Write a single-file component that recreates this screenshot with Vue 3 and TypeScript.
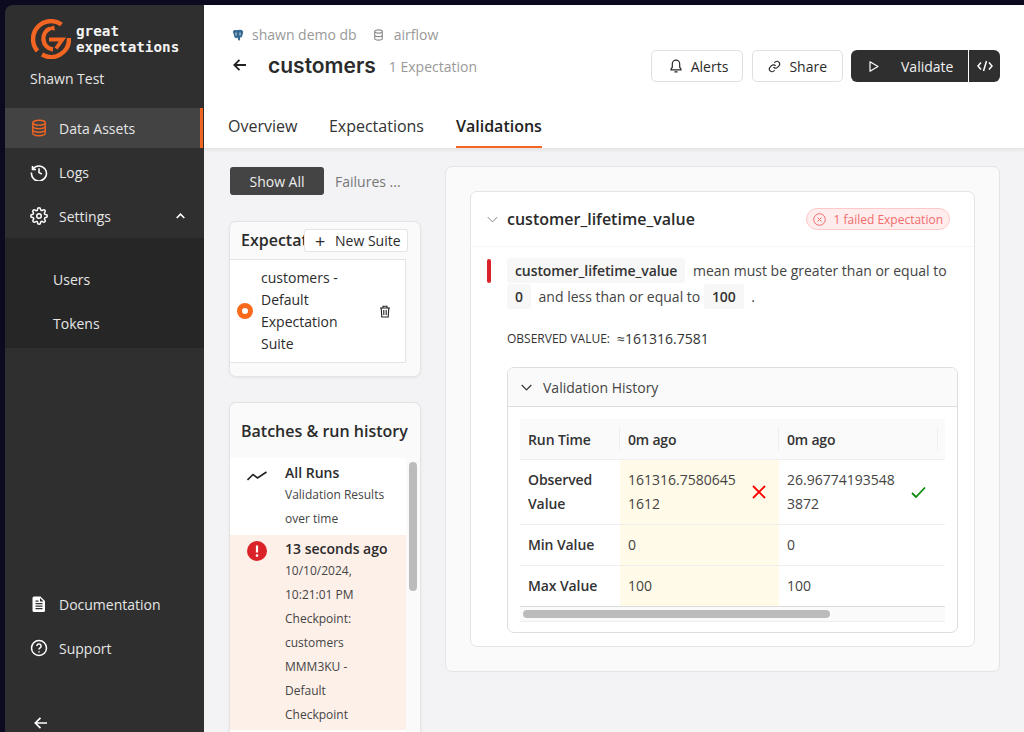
<script setup lang="ts">
const nav = [
  { label: 'Data Assets', icon: 'db', active: true },
  { label: 'Logs', icon: 'history', active: false },
]
</script>

<template>
  <div class="window">
    <aside class="sidebar">
      <div class="brand">
        <svg class="logo" width="40" height="40" viewBox="0 0 40 40" fill="none" stroke="#f26522" stroke-width="4.400">
          <path d="M30.500 5.500A18 18 0 0 0 6.500 32" />
          <path d="M11 35.500A18 18 0 0 0 38 19" />
          <path d="M19 9.500A11 11 0 0 0 22 30.500" />
          <path d="M18 20.500H31.500L25 29.500" stroke-width="3.800" />
          <path d="M14 10l9-3.500 1 5z" fill="#f26522" stroke="none" />
        </svg>
        <div class="brand-text">great<br />expectations</div>
      </div>
      <div class="org">Shawn Test</div>
      <nav class="nav">
        <a v-for="n in nav" :key="n.label" class="nav-item" :class="{ active: n.active }">
          <svg v-if="n.icon === 'db'" width="18" height="18" viewBox="0 0 18 18" fill="none" stroke="#f26522" stroke-width="1.400">
            <ellipse cx="9" cy="3.700" rx="6.200" ry="2.400" />
            <path d="M2.800 3.700V14.300C2.800 15.600 5.600 16.700 9 16.700S15.200 15.600 15.200 14.300V3.700" />
            <path d="M2.800 7.200C2.800 8.500 5.600 9.600 9 9.600S15.200 8.500 15.200 7.200M2.800 10.800C2.800 12.100 5.600 13.200 9 13.200S15.200 12.100 15.200 10.800" />
          </svg>
          <svg v-else width="18" height="18" viewBox="0 0 18 18" fill="none" stroke="#fff" stroke-width="1.600">
            <path d="M2.500 3v3.500H6" />
            <path d="M2.700 6.300A7.500 7.500 0 1 1 1.500 9.500" />
            <path d="M9 5.200V9.500l2.800 1.600" />
          </svg>
          <span>{{ n.label }}</span>
        </a>
        <a class="nav-item">
          <svg width="18" height="18" viewBox="0 0 24 24" fill="none" stroke="#fff" stroke-width="2">
            <circle cx="12" cy="12" r="3" />
            <path d="M19.400 15a1.650 1.650 0 0 0 .33 1.820l.06.06a2 2 0 1 1-2.830 2.830l-.06-.06a1.650 1.650 0 0 0-2.820 1.170V21a2 2 0 1 1-4 0v-.09A1.650 1.650 0 0 0 7.260 19.700l-.06.06a2 2 0 1 1-2.830-2.830l.06-.06A1.650 1.650 0 0 0 3.260 14H3a2 2 0 1 1 0-4h.09A1.650 1.650 0 0 0 4.300 7.260l-.06-.06a2 2 0 1 1 2.830-2.830l.06.06A1.650 1.650 0 0 0 10 3.260V3a2 2 0 1 1 4 0v.09a1.650 1.650 0 0 0 2.820 1.170l.06-.06a2 2 0 1 1 2.830 2.830l-.06.06A1.650 1.650 0 0 0 20.740 10H21a2 2 0 1 1 0 4h-.09a1.650 1.650 0 0 0-1.510 1z" />
          </svg>
          <span>Settings</span>
          <svg class="caret" width="9" height="6" viewBox="0 0 9 6" fill="none" stroke="#fff" stroke-width="1.600"><path d="M.700 5l3.800-3.800L8.300 5" /></svg>
        </a>
      </nav>
      <div class="subnav">
        <a class="sub-item">Users</a>
        <a class="sub-item">Tokens</a>
      </div>
      <div class="nav-bottom">
        <a class="nav-item">
          <svg width="18" height="18" viewBox="0 0 18 18" fill="#fff">
            <path fill-rule="evenodd" d="M4 1.500h6.500l4.500 4.500v9.500a1.500 1.500 0 0 1-1.500 1.500h-9.500A1.500 1.500 0 0 1 2.500 15.500V3A1.500 1.500 0 0 1 4 1.500zM5.500 8v1.200h7V8zM5.500 10.500v1.200h7v-1.200zM5.500 13v1.200h7V13zM5.500 5.500v1.200h3V5.500zM10 3v3.500h3.500z" />
          </svg>
          <span>Documentation</span>
        </a>
        <a class="nav-item">
          <svg width="18" height="18" viewBox="0 0 18 18" fill="none" stroke="#fff" stroke-width="1.500">
            <circle cx="9" cy="9" r="7.500" />
            <path d="M6.900 7a2.100 2.100 0 1 1 3.200 1.800C9.400 9.300 9 9.600 9 10.600" />
            <path d="M9 12.300v1.200" />
          </svg>
          <span>Support</span>
        </a>
        <div class="collapse">
          <svg width="14" height="14" viewBox="0 0 14 14" fill="none" stroke="#fff" stroke-width="1.700"><path d="M13 7H1.500M6.500 1.800L1.300 7l5.200 5.200" /></svg>
        </div>
      </div>
    </aside>

    <main class="main">
      <header class="header">
        <div class="header-top">
          <div class="titles">
            <div class="crumbs">
              <svg width="12" height="13" viewBox="0 0 12 13">
                <path d="M1 3C1 1 3 .8 4.500 1.200L6 1 8 .8c2.500 0 3.500 1.500 3 3.500L10 7.500c-.5 1.200-1.200 1-1.700.4L8 10.500c-.2 1.500-1.500 1.500-2 0L5.800 8.500C4.500 9.500 2.800 9 2.300 7.500z" fill="#336791" />
                <path d="M4 3.500v3M8 3.500v3" stroke="#fff" stroke-width=".8" />
              </svg>
              <span class="crumb-a">shawn demo db</span>
              <svg class="crumb-icon" width="11" height="12" viewBox="0 0 11 12" fill="none" stroke="#8a8a8a" stroke-width="1.100">
                <ellipse cx="5.500" cy="2.500" rx="3.800" ry="1.600" />
                <path d="M1.700 2.500v7c0 .9 1.700 1.600 3.800 1.600s3.800-.7 3.800-1.600v-7M1.700 6c0 .9 1.700 1.600 3.800 1.600S9.300 6.900 9.300 6" />
              </svg>
              <span>airflow</span>
            </div>
            <div class="title-row">
              <svg class="back" width="14" height="14" viewBox="0 0 14 14" fill="none" stroke="#222" stroke-width="1.800"><path d="M13 7H1.500M6.500 1.800L1.300 7l5.200 5.200" /></svg>
              <h1>customers</h1>
              <span class="count">1 Expectation</span>
            </div>
          </div>
          <div class="actions">
            <button class="btn alerts">
              <svg width="14" height="14" viewBox="0 0 14 14" fill="none" stroke="#2b2b2b" stroke-width="1.200">
                <path d="M7 1.200a3.700 3.700 0 0 0-3.700 3.700v3.300l-1.300 2v.6h10v-.6l-1.300-2V4.900A3.700 3.700 0 0 0 7 1.200zM5.400 12.800h3.200" />
              </svg>
              <span>Alerts</span>
            </button>
            <button class="btn share">
              <svg width="13" height="13" viewBox="0 0 24 24" fill="none" stroke="#2b2b2b" stroke-width="2.200">
                <path d="M10 13a5 5 0 0 0 7.500.5l3-3a5 5 0 0 0-7-7l-1.700 1.700" />
                <path d="M14 11a5 5 0 0 0-7.500-.5l-3 3a5 5 0 0 0 7 7l1.700-1.700" />
              </svg>
              <span>Share</span>
            </button>
            <div class="split">
              <button class="split-main">
                <svg width="12" height="13" viewBox="0 0 12 13" fill="none" stroke="#fff" stroke-width="1.200"><path d="M2 1.800v9.400l8-4.700z" stroke-linejoin="round" /></svg>
                <span>Validate</span>
              </button>
              <button class="split-code">
                <svg width="16" height="12" viewBox="0 0 16 12" fill="none" stroke="#fff" stroke-width="1.500"><path d="M4 2.500L1 6l3 3.500M12 2.500L15 6l-3 3.500M9.500 1l-3 10" /></svg>
              </button>
            </div>
          </div>
        </div>
        <div class="tabs">
          <a class="tab">Overview</a>
          <a class="tab">Expectations</a>
          <a class="tab current">Validations</a>
        </div>
      </header>

      <div class="body">
        <div class="left">
          <div class="toggle">
            <span class="toggle-on">Show All</span>
            <span class="toggle-off">Failures ...</span>
          </div>
          <section class="side-card suites">
            <div class="suite-head">
              <span class="suite-title">Expectat</span>
              <button class="new-suite"><span class="plus">+</span>New Suite</button>
            </div>
            <div class="suite-row">
              <span class="radio"></span>
              <span class="suite-name">customers - Default Expectation Suite</span>
              <svg width="12" height="13" viewBox="0 0 12 13" fill="none" stroke="#222" stroke-width="1.100">
                <path d="M1 3h10M4 3V1.300h4V3M2.200 3l.6 9h6.400l.6-9M4.800 5v5M7.200 5v5" />
              </svg>
            </div>
          </section>
          <section class="side-card runs">
            <div class="runs-title">Batches &amp; run history</div>
            <div class="runs-body">
              <div class="runs-list">
                <div class="run overview">
                  <svg class="run-icon" width="20" height="10" viewBox="0 0 20 10" fill="none" stroke="#222" stroke-width="1.600"><path d="M.500 9L6 3.500l4.500 3.500L19.500 1" /></svg>
                  <div class="run-text">
                    <div class="run-title">All Runs</div>
                    <div>Validation Results over time</div>
                  </div>
                </div>
                <div class="run failed">
                  <svg class="run-icon" width="20" height="20" viewBox="0 0 20 20">
                    <circle cx="10" cy="10" r="10" fill="#d92328" />
                    <path d="M10 4.500v7" stroke="#fff" stroke-width="2.200" />
                    <circle cx="10" cy="14.600" r="1.300" fill="#fff" />
                  </svg>
                  <div class="run-text">
                    <div class="run-title">13 seconds ago</div>
                    <div>10/10/2024, 10:21:01 PM</div>
                    <div>Checkpoint: customers MMM3KU - Default Checkpoint</div>
                  </div>
                </div>
              </div>
              <div class="vscroll"><div class="vthumb"></div></div>
            </div>
          </section>
        </div>

        <div class="right">
          <section class="panel">
            <div class="exp-card">
              <div class="exp-head">
                <svg width="11" height="7" viewBox="0 0 11 7" fill="none" stroke="#8a8a8a" stroke-width="1"><path d="M.700 1l4.800 5 4.800-5" /></svg>
                <span class="exp-name">customer_lifetime_value</span>
                <span class="fail-badge">
                  <svg width="13" height="13" viewBox="0 0 13 13" fill="none" stroke="#f26b6b" stroke-width="1"><circle cx="6.500" cy="6.500" r="5.800" /><path d="M4.500 4.500l4 4M8.500 4.500l-4 4" /></svg>
                  1 failed Expectation
                </span>
              </div>
              <div class="exp-body">
                <div class="statement">
                  <span class="redbar"></span>
                  <p>
                    <code>customer_lifetime_value</code> mean must be greater than or equal to
                    <code>0</code> and less than or equal to <code>100</code> .
                  </p>
                </div>
                <div class="observed"><span class="obs-label">OBSERVED VALUE:</span><span class="obs-value">≈161316.7581</span></div>
                <div class="history">
                  <div class="history-head">
                    <svg width="11" height="7" viewBox="0 0 11 7" fill="none" stroke="#333" stroke-width="1.200"><path d="M.700 1l4.800 5 4.800-5" /></svg>
                    <span>Validation History</span>
                  </div>
                  <div class="table-wrap">
                    <div class="table">
                      <div class="cell label head sep">Run Time</div>
                      <div class="cell head sep">0m ago</div>
                      <div class="cell head sep">0m ago</div>
                      <div class="cell head stub"></div>

                      <div class="cell label tall">Observed Value</div>
                      <div class="cell warn tall">
                        <span class="val">161316.75806451612</span>
                        <svg width="14" height="14" viewBox="0 0 14 14" fill="none" stroke="#f00" stroke-width="1.900"><path d="M1 1l12 12M13 1L1 13" /></svg>
                      </div>
                      <div class="cell tall">
                        <span class="val">26.967741935483872</span>
                        <svg class="check" width="15" height="12" viewBox="0 0 15 12" fill="none" stroke="#0a8a0a" stroke-width="1.800"><path d="M1 7l4 4L14 1.500" /></svg>
                      </div>
                      <div class="cell tall stub"></div>

                      <div class="cell label">Min Value</div>
                      <div class="cell warn">0</div>
                      <div class="cell">0</div>
                      <div class="cell stub"></div>

                      <div class="cell label last">Max Value</div>
                      <div class="cell warn last">100</div>
                      <div class="cell last">100</div>
                      <div class="cell last stub"></div>
                    </div>
                    <div class="hscroll"><div class="hthumb"></div></div>
                  </div>
                </div>
              </div>
            </div>
          </section>
        </div>
      </div>
    </main>
  </div>
</template>

<style>
html, body { margin: 0; background: #0b0a1f; overflow: hidden; }
</style>

<style scoped>
* { box-sizing: border-box; }
.window {
  width: 1024px; height: 732px; padding: 5px 0 0 5px; display: flex; overflow: hidden;
  font-family: "Open Sans", "Noto Sans", sans-serif; font-size: 14px; color: #2b2b2b;
}
.sidebar {
  width: 199px; flex: none; background: #2f2f2f; color: #f0f0f0; display: flex; flex-direction: column;
  border-top-left-radius: 8px;
}
.brand { display: flex; align-items: center; gap: 5px; padding: 14px 0 0 26px; }
.logo { flex: none; }
.brand-text { font-family: "DejaVu Sans Mono", monospace; font-size: 14.3px; font-weight: 700; line-height: 16px; color: #f4f4f4; }
.org { padding: 10px 0 0 25px; height: 49px; font-size: 14px; line-height: 20px; color: #e6e6e6; }
.nav { display: flex; flex-direction: column; }
.nav-item { display: flex; align-items: center; gap: 11px; height: 44px; padding-left: 25px; color: #e6e6e6; font-size: 14px; position: relative; }
.nav-item svg { flex: none; }
.nav-item.active { height: 40px; margin: 0 1px 2px 0; background: #434343; border-right: 3px solid #f26522; }
.caret { margin-left: auto; margin-right: 19px; }
.subnav { background: #262626; padding: 19px 0 3px; }
.sub-item { display: flex; align-items: center; height: 44px; padding-left: 48px; color: #e6e6e6; font-size: 14px; }
.nav-bottom { margin-top: auto; display: flex; flex-direction: column; }
.collapse { height: 31px; padding: 15px 0 0 29px; margin-top: 31px; }
.collapse svg { display: block; }

.main { flex: 1; min-width: 0; display: flex; flex-direction: column; background: #f3f3f6; }
.header { height: 144px; background: #fff; padding: 0 24px; display: flex; flex-direction: column; flex: none; border-bottom: 1px solid #e6e6e6; box-shadow: 0 1px 4px rgba(0,0,0,.08); position: relative; z-index: 1; }
.header-top { display: flex; justify-content: space-between; height: 99px; }
.crumbs { display: flex; align-items: center; gap: 8px; padding: 21px 0 0 4px; font-size: 14px; color: #999; line-height: 18px; }
.crumb-a { margin-right: 8px; }
.crumb-icon { margin-right: 2px; }
.title-row { display: flex; align-items: center; margin-top: 8px; }
.back { margin: -2px 0 0 5px; }
h1 { font-family: Inter, "Open Sans", sans-serif; font-size: 21px; font-weight: 600; margin: 0 13px 0 21px; color: #2b2b2b; line-height: 28px; }
.count { color: #999; font-size: 14px; }
.actions { display: flex; gap: 8px; padding-top: 45px; align-items: flex-start; }
.btn { height: 32px; background: #fff; border: 1px solid #e0e0e0; border-radius: 5px; font: inherit; font-size: 14px; color: #2b2b2b; display: flex; align-items: center; }
.alerts { gap: 8px; padding: 0 14px 0 17px; margin-right: 1px; }
.share { gap: 8px; padding: 0 15px; }
.split { display: flex; height: 32px; border-radius: 6px; overflow: hidden; }
.split button { background: #2f2f2f; color: #f0f0f0; border: 0; font: inherit; font-size: 14px; display: flex; align-items: center; }
.split-main { width: 118px; padding: 0 0 0 17px; gap: 21px; border-right: 1px solid #fff !important; }
.split-code { width: 31px; justify-content: center; padding: 0; }
.tabs { display: flex; gap: 31.500px; flex: 1; align-items: stretch; }
.tab { font-size: 16px; color: #333; display: flex; align-items: center; height: 45px; padding-top: 2px; border-bottom: 2px solid transparent; }
.tab.current { font-weight: 600; color: #222; border-bottom-color: #f26522; margin-left: .5px; }

.body { flex: 1; min-height: 0; display: flex; padding: 16px 24px 0 25px; gap: 24px; overflow: hidden; }
.left { width: 192px; flex: none; display: flex; flex-direction: column; }
.toggle { display: flex; align-items: center; gap: 11px; padding-top: 2px; height: 30px; }
.toggle-on { width: 94px; height: 28px; margin-left: 1px; background: #444; color: #eee; border-radius: 3px; display: flex; align-items: center; justify-content: center; font-size: 14px; }
.toggle-off { color: #777; font-size: 14px; }
.side-card { background: #fafafa; border: 1px solid #e4e4e4; border-radius: 7px; box-shadow: 0 1px 3px rgba(0,0,0,.06); }
.suites { margin-top: 26px; height: 156px; overflow: hidden; }
.suite-head { position: relative; height: 37px; padding: 7px 0 0 11px; overflow: hidden; }
.suite-title { display: block; font-size: 16px; font-weight: 600; color: #2b2b2b; white-space: nowrap; }
.new-suite { position: absolute; left: 74px; top: 7px; width: 104px; height: 23px; background: #fff; border: 1px solid #e4e4e4; border-radius: 3px; font: inherit; font-size: 14px; color: #2b2b2b; display: flex; align-items: center; padding: 0 0 0 10px; }
.plus { font-size: 18px; line-height: 20px; width: 20px; text-align: left; font-weight: 400; }
.suite-row { width: 176px; height: 104px; background: #fff; border: 1px solid #e4e4e4; border-left: 0; display: flex; align-items: center; padding-left: 7px; line-height: 22px; }
.radio { width: 16px; height: 16px; border-radius: 50%; border: 5px solid #fb6a1a; flex: none; background: #fff; }
.suite-name { width: 88px; margin: 0 30px 0 8px; flex: none; }
.runs { margin-top: 25px; flex: 1; border-bottom: 0; border-radius: 7px 7px 0 0; display: flex; flex-direction: column; min-height: 0; }
.runs-title { height: 56px; padding: 0 11px; display: flex; align-items: center; font-size: 16px; font-weight: 600; flex: none; border-bottom: 1px solid #e0e0e0; width: 176px; white-space: nowrap; }
.runs-body { flex: 1; display: flex; min-height: 0; margin-top: -1px; }
.runs-list { width: 176px; flex: none; background: #fff; font-size: 12px; line-height: 24px; color: #444; }
.run { display: flex; padding: 3px 0 3px 17px; gap: 18px; }
.run.overview { padding: 4px 0 4px 17px; }
.run.failed { background: #fdf0e9; }
.run-icon { flex: none; margin-top: 9px; }
.failed .run-icon { margin-top: 3px; }
.run-text { width: 104px; }
.run-title { font-size: 14px; font-weight: 600; color: #2b2b2b; line-height: 21px; }
.vscroll { flex: 1; padding: 4px 3px 0; }
.vthumb { width: 8px; height: 129px; border-radius: 4px; background: #bbb; }

.right { flex: 1; min-width: 0; padding-top: 1px; }
.panel { height: 506px; background: #fafafa; border: 1px solid #e4e4e4; border-radius: 7px; padding: 24px; }
.exp-card { background: #fff; border: 1px solid #e4e4e4; border-radius: 7px; height: 456px; }
.exp-head { height: 55px; display: flex; align-items: center; padding: 0 24px 0 16px; border-bottom: 1px solid #f6f6f6; }
.exp-name { font-size: 16px; font-weight: 600; margin-left: 9px; color: #2b2b2b; }
.fail-badge { margin-left: auto; height: 22px; background: #ffeded; border: 1px solid #ffc9c9; border-radius: 11px; color: #f26b6b; font-size: 12px; display: flex; align-items: center; gap: 7px; padding: 0 6px; }
.exp-body { padding: 11px 20px 0 36px; position: relative; }
.statement p { margin: 0; font-size: 14px; line-height: 26px; color: #444; }
.redbar { position: absolute; left: 16px; top: 12px; width: 4px; height: 24px; background: #d92328; border-radius: 2px; }
code { font-family: inherit; font-weight: 600; letter-spacing: -.09px; font-size: 14px; color: #333; background: #f7f7f7; border-radius: 3px; padding: 3px 8px; margin-right: 4px; }
.observed { display: flex; align-items: center; gap: 7px; margin-top: 17px; font-size: 12px; color: #333; line-height: 24px; }
.obs-value { font-size: 14px; }
.history { margin-top: 16px; width: 451px; height: 266px; border: 1px solid #dedede; border-radius: 7px; overflow: hidden; }
.history-head { height: 39px; background: #fafafa; border-bottom: 1px solid #dedede; display: flex; align-items: center; gap: 11px; padding-left: 13px; color: #444; }
.table-wrap { margin: 12px 12px 0; }
.table { display: grid; grid-template-columns: 100px 159px 159px 7px; background: #fff; }
.cell { display: flex; align-items: center; padding: 0 8px; border-bottom: 1px solid #eee; height: 41px; line-height: 24px; color: #444; justify-content: space-between; position: relative; }
.cell.label { font-weight: 600; letter-spacing: -.1px; color: #333; }
.stub { padding: 0; }
.head { background: #fafafa; font-weight: 600; letter-spacing: -.2px; color: #333; padding-top: 1px; }
.sep::after { content: ""; position: absolute; right: 0; top: 9px; bottom: 9px; width: 1px; background: #eee; }
.tall { height: 65px; }
.warn { background: #fffbe8; }
.val { width: 108px; word-break: break-all; flex: none; }
.cell svg { flex: none; margin-right: 5px; }
.cell svg.check { margin-right: 4px; }
.last { border-bottom: 1px solid #ddd; }
.hscroll { height: 15px; padding: 3px; background: #fafafa; border-bottom: 1px solid #eee; }
.hthumb { width: 307px; height: 8px; border-radius: 4px; background: #bbb; }
</style>
